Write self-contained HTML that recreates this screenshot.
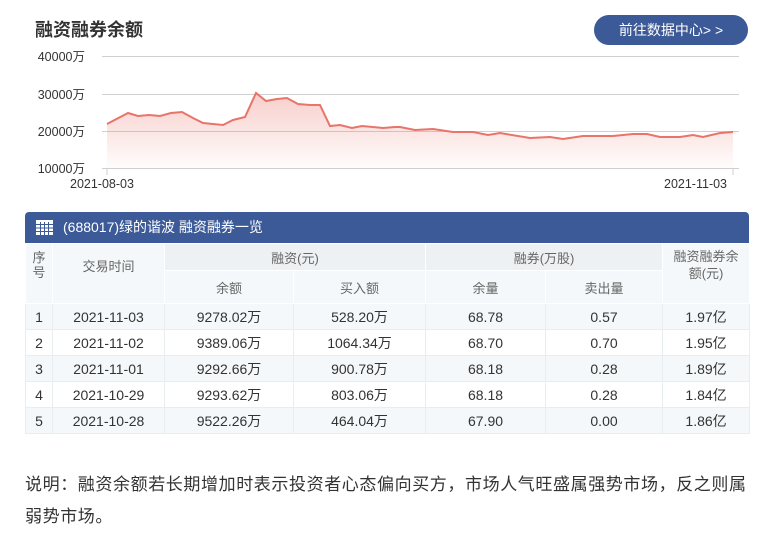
<!DOCTYPE html>
<html><head><meta charset="utf-8"><style>
body{margin:0;width:777px;height:538px;background:#fff;font-family:"Liberation Sans","Noto Sans CJK SC",sans-serif;position:relative;overflow:hidden;color:#333}
.t{position:absolute;left:35px;top:16px;font-size:18px;font-weight:bold;color:#333}
.btn{position:absolute;left:594px;top:15px;width:154px;height:30px;border-radius:15px;background:#3c5a98;color:#fff;font-size:14px;line-height:30px;text-align:center}
.yl{position:absolute;font-size:12.5px;color:#333;width:54px;text-align:right;left:31px}
.xl{position:absolute;font-size:12.5px;color:#333;top:177px}
.hd{position:absolute;left:25px;top:212px;width:724px;height:31px;background:#3c5a98;border-radius:4px 4px 0 0;color:#fff;font-size:14px;line-height:31px}
table{position:absolute;left:25px;top:243px;width:724px;border-collapse:collapse;font-size:14px;table-layout:fixed}
td{text-align:center;padding:0;border:1px solid #e8edf0;color:#333}
th{font-weight:normal;color:#666;font-size:13px;border:1px solid #fff;background:#f5f8fa;padding:0}
th.g{background:#edf1f4;height:26px}
tr.r td{height:25px}
tr.a td{background:#f5f8fa}
.note{position:absolute;left:25px;top:469px;width:734px;font-size:17px;letter-spacing:0.6px;line-height:32px;color:#333}
</style></head><body>
<div class="t">融资融券余额</div>
<div class="btn">前往数据中心&gt; &gt;</div>
<div class="yl" style="top:46px">40000万</div>
<div class="yl" style="top:84px">30000万</div>
<div class="yl" style="top:121px">20000万</div>
<div class="yl" style="top:158px">10000万</div>
<svg style="position:absolute;left:0;top:0" width="777" height="200">
<defs><linearGradient id="g" x1="0" y1="0" x2="0" y2="1"><stop offset="0" stop-color="#e8746a" stop-opacity=".35"/><stop offset="1" stop-color="#e8746a" stop-opacity=".02"/></linearGradient></defs>
<g stroke="#d0d0d0" stroke-width="1"><line x1="102" y1="56.5" x2="739" y2="56.5"/><line x1="102" y1="94.5" x2="739" y2="94.5"/><line x1="102" y1="131.5" x2="739" y2="131.5"/><line x1="102" y1="168.5" x2="739" y2="168.5"/><line x1="107" y1="168" x2="107" y2="175"/><line x1="733" y1="168" x2="733" y2="175"/></g>
<path d="M107,124 L128,113 L138,116 L149,115 L160,116 L171,113 L182,112 L193,118 L203,123 L223,125 L233,120 L245,117 L256,93 L266,101 L277,99 L287,98 L298,104 L310,105 L320,105 L330,126 L340,125 L352,128 L362,126 L383,128 L395,127 L400,127 L415,130 L433,129 L453,132 L473,132 L488,135 L500,133 L530,138 L550,137 L563,139 L583,136 L613,136 L633,134 L647,134 L660,137 L680,137 L693,135 L703,137 L720,133 L733,132 L733,168 L107,168 Z" fill="url(#g)"/>
<path d="M107,124 L128,113 L138,116 L149,115 L160,116 L171,113 L182,112 L193,118 L203,123 L223,125 L233,120 L245,117 L256,93 L266,101 L277,99 L287,98 L298,104 L310,105 L320,105 L330,126 L340,125 L352,128 L362,126 L383,128 L395,127 L400,127 L415,130 L433,129 L453,132 L473,132 L488,135 L500,133 L530,138 L550,137 L563,139 L583,136 L613,136 L633,134 L647,134 L660,137 L680,137 L693,135 L703,137 L720,133 L733,132" fill="none" stroke="#e8746a" stroke-width="2"/>
</svg>
<div class="xl" style="left:70px">2021-08-03</div>
<div class="xl" style="left:664px">2021-11-03</div>
<div class="hd"><svg style="position:absolute;left:11px;top:8px" width="17" height="15"><rect x="0" y="0" width="17" height="15" fill="#fff"/><g stroke="#3c5a98" stroke-width="1"><line x1="0" y1="4.5" x2="17" y2="4.5"/><line x1="0" y1="8" x2="17" y2="8"/><line x1="0" y1="11.5" x2="17" y2="11.5"/><line x1="4.5" y1="2" x2="4.5" y2="15"/><line x1="8.5" y1="2" x2="8.5" y2="15"/><line x1="12.5" y1="2" x2="12.5" y2="15"/></g></svg><span style="position:absolute;left:38px">(688017)绿的谐波 融资融券一览</span></div>
<table>
<colgroup><col style="width:27px"><col style="width:112px"><col style="width:129px"><col style="width:132px"><col style="width:120px"><col style="width:117px"><col style="width:87px"></colgroup>
<tr><th rowspan="2" style="vertical-align:top;line-height:15px;padding-top:6px">序<br>号</th><th rowspan="2" style="vertical-align:top;padding-top:12px">交易时间</th><th colspan="2" class="g">融资(元)</th><th colspan="2" class="g">融券(万股)</th><th rowspan="2" style="vertical-align:top;line-height:17px;padding-top:4px">融资融券余<br>额(元)</th></tr>
<tr><th style="height:32px">余额</th><th>买入额</th><th>余量</th><th>卖出量</th></tr>
<tr class="r a"><td>1</td><td>2021-11-03</td><td>9278.02万</td><td>528.20万</td><td>68.78</td><td>0.57</td><td>1.97亿</td></tr>
<tr class="r"><td>2</td><td>2021-11-02</td><td>9389.06万</td><td>1064.34万</td><td>68.70</td><td>0.70</td><td>1.95亿</td></tr>
<tr class="r a"><td>3</td><td>2021-11-01</td><td>9292.66万</td><td>900.78万</td><td>68.18</td><td>0.28</td><td>1.89亿</td></tr>
<tr class="r"><td>4</td><td>2021-10-29</td><td>9293.62万</td><td>803.06万</td><td>68.18</td><td>0.28</td><td>1.84亿</td></tr>
<tr class="r a"><td>5</td><td>2021-10-28</td><td>9522.26万</td><td>464.04万</td><td>67.90</td><td>0.00</td><td>1.86亿</td></tr>
</table>
<div class="note">说明：融资余额若长期增加时表示投资者心态偏向买方，市场人气旺盛属强势市场，反之则属弱势市场。</div>
</body></html>
